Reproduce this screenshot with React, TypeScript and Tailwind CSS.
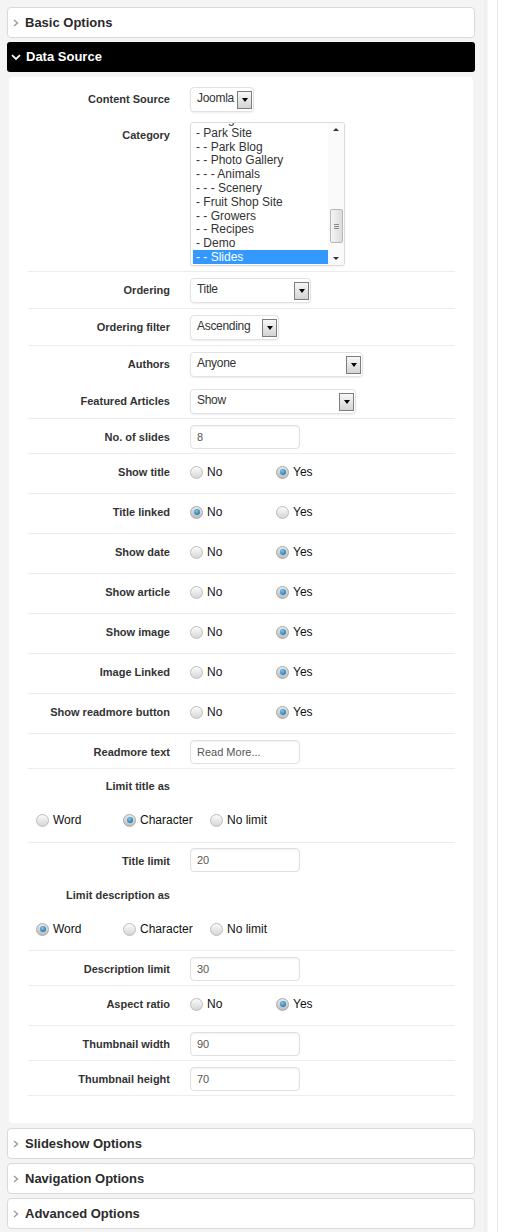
import React from 'react';

// Shared font stack (Arial metrics)
const arial = "font-['Liberation_Sans',Arial,sans-serif]";

interface HeaderProps {
  title: string;
  open?: boolean;
}

const ChevronRight: React.FC = () => (
  <svg width="6" height="8" viewBox="0 0 6 8" className="shrink-0">
    <polyline points="1,1 4.5,4 1,7" fill="none" stroke="#9a9a9a" strokeWidth="1.4" />
  </svg>
);

const ChevronDown: React.FC = () => (
  <svg width="10" height="7" viewBox="0 0 10 7" className="shrink-0">
    <polyline points="1,1.2 5,5 9,1.2" fill="none" stroke="#ffffff" strokeWidth="1.8" />
  </svg>
);

const PanelHeader: React.FC<HeaderProps> = ({ title, open }) => {
  if (open) {
    return (
      <div className="flex h-[30px] items-center gap-[5px] rounded-[3px] bg-black pl-[4px]">
        <ChevronDown />
        <span className="text-[13px] font-bold text-white">{title}</span>
      </div>
    );
  }
  return (
    <div className="flex h-[31px] items-center gap-[6px] rounded-[4px] border border-[#d9d9d9] bg-white pl-[5px]">
      <ChevronRight />
      <span className="text-[13px] font-bold text-[#2b2b2b]">{title}</span>
    </div>
  );
};

// Little grey arrow button inside the selects
const DropButton: React.FC = () => (
  <span className="flex h-[18px] w-[15px] shrink-0 items-center justify-center border border-[#7d7d7d] bg-linear-to-b from-[#f7f7f7] to-[#d4d4d4]">
    <span className="mt-[1px] h-0 w-0 border-x-[3.5px] border-t-[4px] border-x-transparent border-t-black" />
  </span>
);

interface SelectProps {
  value: string;
  width: string;
}

const SelectBox: React.FC<SelectProps> = ({ value, width }) => (
  <div
    className={`flex h-[25px] items-center justify-between gap-[3px] rounded-[4px] border border-[#e2e2e2] bg-white pl-[6px] pr-[1px] shadow-[0_1px_2px_rgba(0,0,0,0.07)] ${width}`}
  >
    <span className="-mt-[3px] whitespace-nowrap text-[12px] tracking-[-0.3px] text-[#333]">{value}</span>
    <DropButton />
  </div>
);

const TextInput: React.FC<{ value: string }> = ({ value }) => (
  <div className="flex h-[24px] w-[110px] items-center rounded-[4px] border border-[#e0e0e0] bg-white pl-[6px] shadow-[inset_0_1px_2px_rgba(0,0,0,0.06)]">
    <span className="text-[11px] text-[#555]">{value}</span>
  </div>
);

const Radio: React.FC<{ checked?: boolean }> = ({ checked }) => (
  <span
    className={`flex h-[13px] w-[13px] shrink-0 items-center justify-center rounded-full border ${
      checked
        ? 'border-[#a9a9a9] bg-linear-to-b from-[#e8e8e8] to-[#bdbdbd]'
        : 'border-[#bcbcbc] bg-linear-to-b from-[#fbfbfb] to-[#d6d6d6]'
    }`}
  >
    {checked && (
      <span className="h-[6px] w-[6px] rounded-full bg-[radial-gradient(circle_at_40%_35%,#7cc6f2,#0d5f97)]" />
    )}
  </span>
);

interface RadioGroupProps {
  options: string[];
  selected: number;
  itemWidth: string;
}

const RadioGroup: React.FC<RadioGroupProps> = ({ options, selected, itemWidth }) => (
  <div className="flex">
    {options.map((opt, i) => (
      <div key={opt} className={`flex items-center gap-[4px] ${itemWidth}`}>
        <Radio checked={i === selected} />
        <span className="text-[12px] leading-[14px] text-[#111]">{opt}</span>
      </div>
    ))}
  </div>
);

interface RowProps {
  label: string;
  height: string;
  border?: boolean;
  controlPad?: string;
  children?: React.ReactNode;
}

const Row: React.FC<RowProps> = ({ label, height, border = true, controlPad = 'pt-[6px]', children }) => (
  <div className={`flex ${height} ${border ? 'border-b border-[#ededed]' : ''}`}>
    <div className="w-[142px] shrink-0 pt-[11px] text-right text-[11px] font-bold leading-[14px] text-[#333]">
      {label}
    </div>
    <div className={`ml-[20px] ${controlPad}`}>{children}</div>
  </div>
);

const categories = [
  '- - Blog',
  '- Park Site',
  '- - Park Blog',
  '- - Photo Gallery',
  '- - - Animals',
  '- - - Scenery',
  '- Fruit Shop Site',
  '- - Growers',
  '- - Recipes',
  '- Demo',
  '- - Slides',
];

const CategoryList: React.FC = () => (
  <div className="flex h-[144px] w-[155px] overflow-hidden rounded-[3px] border border-[#dcdcdc] bg-white pl-[2px] shadow-[0_1px_2px_rgba(0,0,0,0.06)]">
    <div className="flex-1 overflow-hidden pt-[1px]">
      <div className="-mt-[12px]">
        {categories.map((c, i) => (
          <div
            key={c}
            className={`h-[13.8px] pl-[3px] text-[12px] leading-[14px] ${
              i === categories.length - 1 ? 'bg-[#3399ff] text-white' : 'text-[#333]'
            }`}
          >
            {c}
          </div>
        ))}
      </div>
    </div>
    {/* scrollbar */}
    <div className="flex w-[16px] flex-col items-center bg-[#fafafa] py-[5px]">
      <span className="h-0 w-0 border-x-[3px] border-b-[3px] border-x-transparent border-b-[#333]" />
      <div className="flex-1" />
      <div className="mb-[14px] flex h-[34px] w-[13px] flex-col items-center justify-center gap-[1px] rounded-[2px] border border-[#b8b8b8] bg-linear-to-r from-[#f4f4f4] to-[#dcdcdc]">
        <span className="h-[1px] w-[5px] bg-[#888]" />
        <span className="h-[1px] w-[5px] bg-[#888]" />
        <span className="h-[1px] w-[5px] bg-[#888]" />
      </div>
      <span className="h-0 w-0 border-x-[3px] border-t-[3px] border-x-transparent border-t-[#333]" />
    </div>
  </div>
);

const yesNo = ['No', 'Yes'];
const limits = ['Word', 'Character', 'No limit'];

const radioRows: { label: string; selected: number }[] = [
  { label: 'Show title', selected: 1 },
  { label: 'Title linked', selected: 0 },
  { label: 'Show date', selected: 1 },
  { label: 'Show article', selected: 1 },
  { label: 'Show image', selected: 1 },
  { label: 'Image Linked', selected: 1 },
  { label: 'Show readmore button', selected: 1 },
];

interface LimitRowProps {
  label: string;
  selected: number;
  height: string;
}

const LimitRow: React.FC<LimitRowProps> = ({ label, selected, height }) => (
  <div className={`flex flex-col border-b border-[#ededed] ${height}`}>
    <div className="w-[142px] pt-[10px] text-right text-[11px] font-bold leading-[14px] text-[#333]">{label}</div>
    <div className="ml-[8px] mt-[20px]">
      <RadioGroup options={limits} selected={selected} itemWidth="w-[87px]" />
    </div>
  </div>
);

const App: React.FC = () => {
  return (
    <div className={`flex min-h-[1232px] w-[508px] bg-white ${arial}`}>
      <div className="w-[484px] shrink-0 bg-[#f4f4f4] pl-[7px] pr-[9px] pt-[7px]">
        <PanelHeader title="Basic Options" />
        <div className="mt-[4px]">
          <PanelHeader title="Data Source" open />
        </div>

        <div className="mx-[2px] mt-[5px] rounded-[4px] bg-white pb-[27px] pl-[19px] pr-[18px] pt-[4px]">
          <Row label="Content Source" height="h-[36px]" border={false}>
            <SelectBox value="Joomla" width="w-[64px]" />
          </Row>
          <Row label="Category" height="h-[155px]" controlPad="pt-[5px]">
            <CategoryList />
          </Row>
          <Row label="Ordering" height="h-[37px]">
            <SelectBox value="Title" width="w-[121px]" />
          </Row>
          <Row label="Ordering filter" height="h-[37px]">
            <SelectBox value="Ascending" width="w-[89px]" />
          </Row>
          <Row label="Authors" height="h-[37px]" border={false}>
            <SelectBox value="Anyone" width="w-[173px]" />
          </Row>
          <Row label="Featured Articles" height="h-[36px]">
            <SelectBox value="Show" width="w-[166px]" />
          </Row>
          <Row label="No. of slides" height="h-[35px]">
            <TextInput value="8" />
          </Row>

          {radioRows.map((r) => (
            <Row key={r.label} label={r.label} height="h-[40px]" controlPad="pt-[11px]">
              <RadioGroup options={yesNo} selected={r.selected} itemWidth="w-[86px]" />
            </Row>
          ))}

          <Row label="Readmore text" height="h-[35px]">
            <TextInput value="Read More..." />
          </Row>
          <LimitRow label="Limit title as" selected={1} height="h-[74px]" />
          <Row label="Title limit" height="h-[35px]" border={false} controlPad="pt-[5px]">
            <TextInput value="20" />
          </Row>
          <LimitRow label="Limit description as" selected={0} height="h-[73px]" />
          <Row label="Description limit" height="h-[35px]">
            <TextInput value="30" />
          </Row>
          <Row label="Aspect ratio" height="h-[40px]" controlPad="pt-[11px]">
            <RadioGroup options={yesNo} selected={1} itemWidth="w-[86px]" />
          </Row>
          <Row label="Thumbnail width" height="h-[35px]">
            <TextInput value="90" />
          </Row>
          <Row label="Thumbnail height" height="h-[35px]">
            <TextInput value="70" />
          </Row>
        </div>

        <div className="mt-[5px]">
          <PanelHeader title="Slideshow Options" />
        </div>
        <div className="mt-[4px]">
          <PanelHeader title="Navigation Options" />
        </div>
        <div className="mt-[4px]">
          <PanelHeader title="Advanced Options" />
        </div>
      </div>

      {/* right edge of the page */}
      <div className="w-[4px] shrink-0 bg-linear-to-r from-[#ececec] to-[#f7f7f7]" />
      <div className="w-[9px] shrink-0 bg-white" />
      <div className="w-[1px] shrink-0 bg-[#e8e8e8]" />
      <div className="flex-1 bg-white" />
    </div>
  );
};

export default App;
